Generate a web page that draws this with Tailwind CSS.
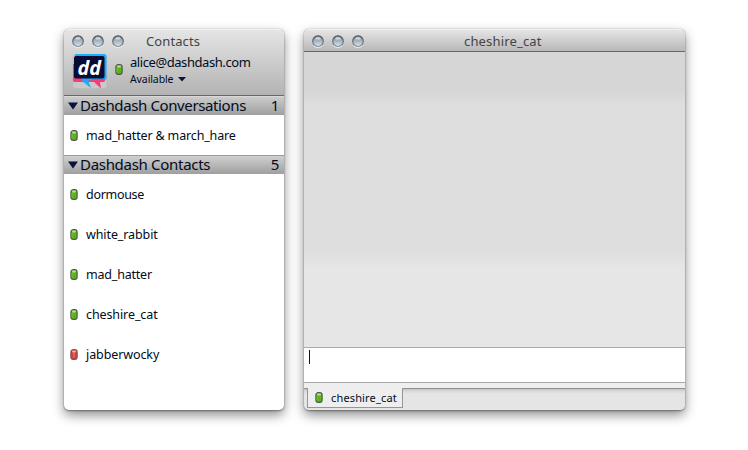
<!DOCTYPE html>
<html lang="en">
<head>
<meta charset="utf-8">
<title>Contacts</title>
<script src="https://cdn.jsdelivr.net/npm/@tailwindcss/browser@4"></script>
</head>
<body class="flex h-[450px] w-[748px] gap-5 overflow-hidden bg-white pt-[29px] pl-16 font-['Noto_Sans',sans-serif] text-[#020b20]">
<svg class="absolute h-0 w-0">
  <defs>
    <linearGradient id="glass" x1="0" y1="0" x2="0" y2="1"><stop offset="0" stop-color="#8a939f"/><stop offset=".45" stop-color="#a3b1bf"/><stop offset="1" stop-color="#dbe7ee"/></linearGradient>
    <linearGradient id="rim" x1="0" y1="0" x2="0" y2="1"><stop offset="0" stop-color="#484a4e"/><stop offset="1" stop-color="#838a92"/></linearGradient>
    <symbol id="light" viewBox="0 0 12 13"><circle cx="6" cy="7" r="5.9" fill="#eee"/><circle cx="6" cy="6.2" r="5.3" fill="url(#glass)" stroke="url(#rim)" stroke-width="1.2"/><ellipse cx="6" cy="3.4" rx="2.6" ry="1.2" fill="#dde3e8" opacity=".8"/></symbol>
    <symbol id="online" viewBox="0 0 8 11"><rect x=".9" y=".7" width="6.2" height="9.6" rx="2.4" fill="#5bb514" stroke="#505a4c" stroke-width="1.2"/><rect x="2" y="1.4" width="4" height="2" rx=".8" fill="#b9dd9b"/><path d="M2 4v4" stroke="#7cc944" stroke-width=".8"/></symbol>
    <symbol id="busy" viewBox="0 0 8 11"><rect x=".9" y=".7" width="6.2" height="9.6" rx="2.4" fill="#dc3560" stroke="#8c4a3c" stroke-width="1.2"/><rect x="2" y="1.4" width="4" height="2" rx=".8" fill="#efb775"/><path d="M4 3.4v5" stroke="#d98a30" stroke-width="1.2"/></symbol>
  </defs>
</svg>

<section class="flex h-[381px] w-[220px] flex-col overflow-hidden rounded-[5px] bg-white shadow-[0_0_1px_#777,0_1px_2px_rgba(0,0,0,.35),0_5px_12px_rgba(0,0,0,.45)]">
  <header class="h-[67px] shrink-0 border-t border-b border-t-[#f0f0f0] border-b-[#68686c] bg-linear-to-b from-[#e5e5e5] to-[#b3b3b3]">
    <div class="flex h-[22px] items-center pl-2">
      <div class="flex gap-2">
        <svg class="h-[13px] w-3"><use href="#light"/></svg><svg class="h-[13px] w-3"><use href="#light"/></svg><svg class="h-[13px] w-3"><use href="#light"/></svg>
      </div>
      <h1 class="ml-[22px] text-[13px] leading-[22px] tracking-[.1px] whitespace-nowrap text-[#444]">Contacts</h1>
    </div>
    <div class="flex pl-2">
      <svg class="mt-0.5 h-[36px] w-[36px]" viewBox="0 0 36 36">
        <rect x=".8" y=".5" width="34" height="34" rx="3" fill="#c9c9cb" stroke="#b8b8b8" stroke-width=".5"/>
        <path d="M1 10V26Q1 28 3 28H22L29 34.500L28 28H31Q33 28 33 26V10Z" fill="#f83c76"/>
        <path d="M4 0H32Q34.500 0 34.500 3V24Q34.500 26 32.500 26H22L16 26.500L19 34L10 27L9 23L3 12V2Q3 0 4 0Z" fill="#1cabf8"/>
        <path d="M1 10V26Q1 28 3 28H11L9 23H4Z" fill="#f83c76"/>
        <path d="M20 25L22 28H31Q33 28 33 25Z" fill="#f83c76"/>
        <rect x="2" y="2" width="30.500" height="22.500" rx="2" fill="#080b34"/>
        <text x="5.500" y="21" font-family="Open Sans, sans-serif" font-size="20" font-weight="700" font-style="italic" fill="#fff" textLength="23.500" lengthAdjust="spacingAndGlyphs">dd</text>
      </svg>
      <svg class="mt-[12px] ml-[7px] h-[11px] w-2"><use href="#online"/></svg>
      <div class="ml-[7px] whitespace-nowrap">
        <p class="mt-px text-[13px] leading-[18px] tracking-[-.43px]">alice@dashdash.com</p>
        <p class="mt-px flex items-center text-[10.5px] leading-[15px] tracking-[-.1px]">Available<svg class="ml-[5px] h-[5px] w-2" viewBox="0 0 8 5"><path d="M0 0H8L4 4.5Z" fill="#07133c"/></svg></p>
      </div>
    </div>
  </header>
  <h2 class="flex h-[19px] shrink-0 items-center border-t border-[#d8d8d8] bg-linear-to-b from-[#cbcbcb] to-[#9f9f9f] pr-[5px] pl-1 text-[15px] leading-[16px] tracking-[-.38px] whitespace-nowrap">
    <svg class="mr-[2px] h-2 w-[10px]" viewBox="0 0 10 8"><path d="M0 .5H10L5 7.500Z" fill="#07133c"/></svg><span class="-mt-0.5">Dashdash Conversations</span><span class="-mt-0.5 ml-auto">1</span>
  </h2>
  <div class="flex h-10 shrink-0 items-center pl-1.5 text-[12.5px] tracking-[-.15px] whitespace-nowrap"><svg class="mr-2 h-[11px] w-2"><use href="#online"/></svg><span class="pt-0.5">mad_hatter &amp; march_hare</span></div>
  <h2 class="flex h-[19px] shrink-0 items-center border-t border-[#999] bg-linear-to-b from-[#d0d0d0] to-[#9f9f9f] pr-[5px] pl-1 text-[15px] leading-[16px] tracking-[-.3px] whitespace-nowrap">
    <svg class="mr-[2px] h-2 w-[10px]" viewBox="0 0 10 8"><path d="M0 .5H10L5 7.500Z" fill="#07133c"/></svg><span class="-mt-0.5">Dashdash Contacts</span><span class="-mt-0.5 ml-auto">5</span>
  </h2>
  <ul class="text-[12.5px] tracking-[-.1px] whitespace-nowrap">
    <li class="flex h-10 items-center pl-1.5"><svg class="mr-2 h-[11px] w-2"><use href="#online"/></svg><span class="pt-0.5 tracking-[-.3px]">dormouse</span></li>
    <li class="flex h-10 items-center pl-1.5"><svg class="mr-2 h-[11px] w-2"><use href="#online"/></svg><span class="pt-0.5">white_rabbit</span></li>
    <li class="flex h-10 items-center pl-1.5"><svg class="mr-2 h-[11px] w-2"><use href="#online"/></svg><span class="pt-0.5 tracking-[-.2px]">mad_hatter</span></li>
    <li class="flex h-10 items-center pl-1.5"><svg class="mr-2 h-[11px] w-2"><use href="#online"/></svg><span class="pt-0.5">cheshire_cat</span></li>
    <li class="flex h-10 items-center pl-1.5"><svg class="mr-2 h-[11px] w-2"><use href="#busy"/></svg><span class="pt-0.5">jabberwocky</span></li>
  </ul>
</section>

<section class="flex h-[381px] w-[381px] flex-col overflow-hidden rounded-[5px] bg-[#e6e6e6] shadow-[0_0_1px_#777,0_1px_2px_rgba(0,0,0,.35),0_5px_12px_rgba(0,0,0,.45)]">
  <header class="flex h-[23px] shrink-0 items-center border-t border-b border-t-[#f0f0f0] border-b-[#68686c] bg-linear-to-b from-[#e5e5e5] to-[#b8b8b8] pl-2">
    <div class="flex gap-2 pt-0.5">
      <svg class="h-[13px] w-3"><use href="#light"/></svg><svg class="h-[13px] w-3"><use href="#light"/></svg><svg class="h-[13px] w-3"><use href="#light"/></svg>
    </div>
    <h1 class="ml-[100px] text-[13px] leading-[20px] tracking-[.17px] text-[#444]">cheshire_cat</h1>
  </header>
  <div class="h-[295px] shrink-0 bg-[linear-gradient(#d6d6d6_0,#d6d6d6_38px,#dedede_54px,#dedede_198px,#e6e6e6_216px)]"></div>
  <div class="h-9 shrink-0 border-y border-[#aaa] bg-white pt-[2px] pl-[5px]"><div class="h-[14px] w-px bg-[#07133c]"></div></div>
  <div class="h-[5px] shrink-0 bg-[#eee]"></div>
  <footer class="h-[22px] border-t border-[#909090] bg-[linear-gradient(#c4c4c4_0,#d8d8d8_2px,#e5e5e5_5px)] pl-[3px]">
    <div class="flex h-[20px] w-[96px] -translate-y-px items-center border border-t-0 border-[#969696] bg-[#eee] pl-[7px] text-[11px] tracking-[.15px]"><svg class="mr-2 h-[11px] w-2"><use href="#online"/></svg><span class="pt-0.5">cheshire_cat</span></div>
  </footer>
</section>
</body>
</html>
